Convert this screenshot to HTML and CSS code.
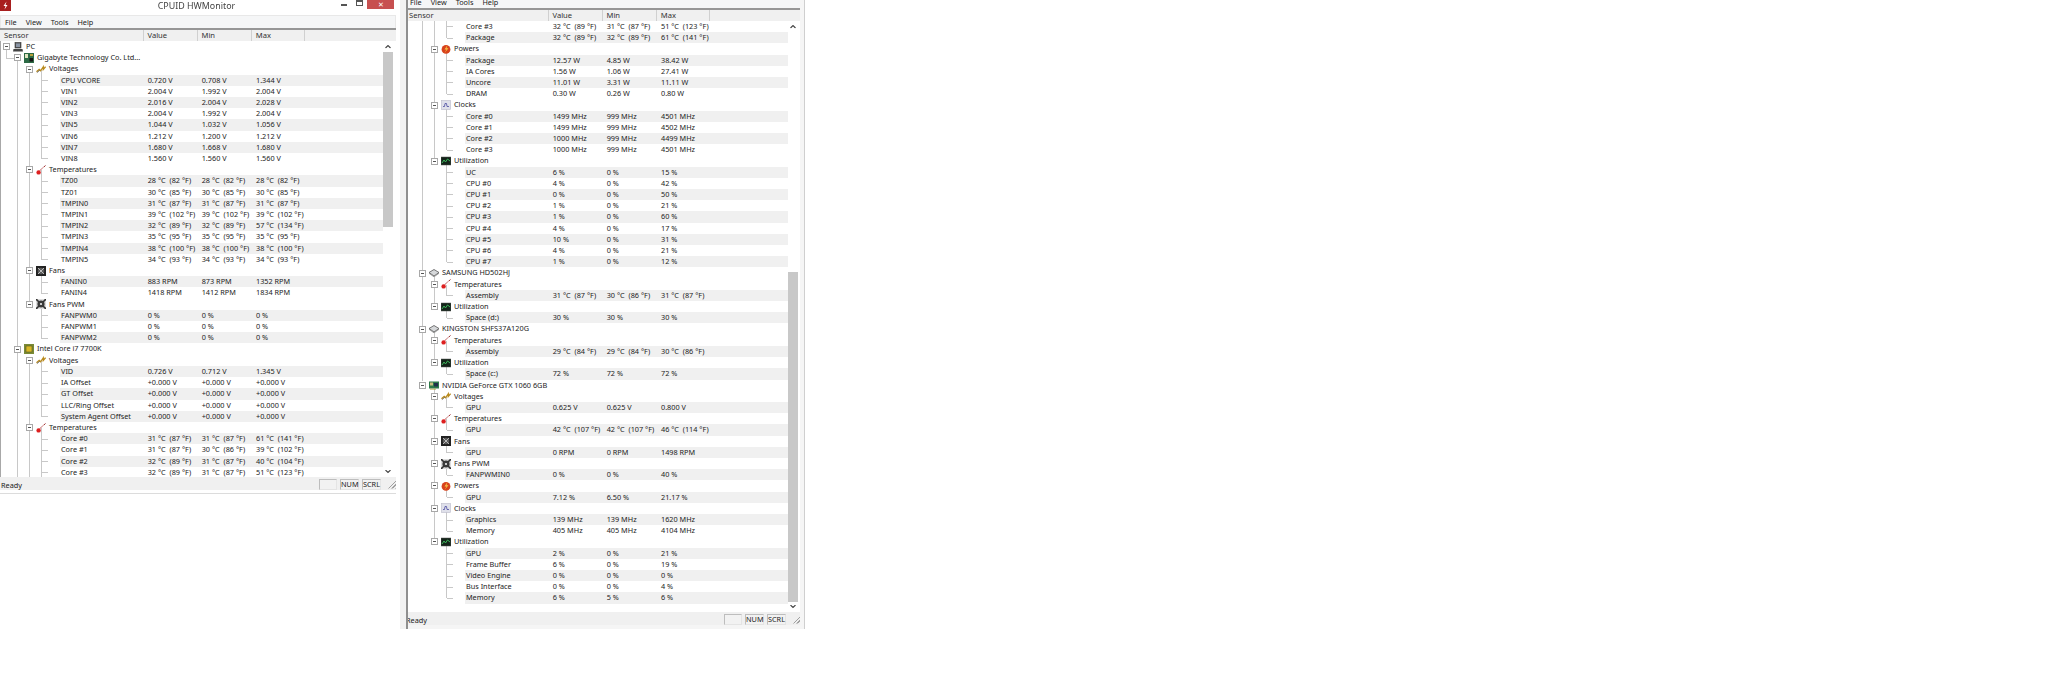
FILE: index.html
```html
<!DOCTYPE html>
<html lang="en">
<head>
<meta charset="utf-8">
<title>CPUID HWMonitor</title>
<link rel="stylesheet" href="styles.css">
</head>
<body>
<svg class="defs" width="0" height="0" aria-hidden="true">
  <symbol id="i-pc" viewBox="0 0 10 10"><rect x="2" y="0.5" width="6" height="5.5" fill="#555" stroke="#333" stroke-width=".6"/><rect x="3" y="1.5" width="4" height="3.5" fill="#8a95a5"/><path d="M0.5 7h9l.5 2.5H0z" fill="#444"/></symbol>
  <symbol id="i-mobo" viewBox="0 0 10 10"><rect width="10" height="10" fill="#2d6a45"/><rect x="1" y="1" width="3" height="4" fill="#dfe3c0"/><rect x="5.5" y="5" width="3.5" height="3.5" fill="#151515"/><rect x="6" y="1" width="3" height="2" fill="#b8a13a"/></symbol>
  <symbol id="i-volt" viewBox="0 0 11 10"><path d="M0.5 8 3.5 5.500 5 7 8 2.500 8 5.500 10.500 2.500" fill="none" stroke="#b98a1c" stroke-width="1.4"/><path d="M1 9 4 6.500" stroke="#444" stroke-width=".8"/></symbol>
  <symbol id="i-temp" viewBox="0 0 10 10"><path d="M9.500 0.500 3.500 6" stroke="#9a2b2b" stroke-width="1"/><path d="M8 2 4 6" stroke="#e8b5b5" stroke-width="1"/><circle cx="2.600" cy="7.400" r="2.200" fill="#dd1f1f"/></symbol>
  <symbol id="i-fan" viewBox="0 0 10 10"><rect width="10" height="10" fill="#222"/><circle cx="5" cy="5" r="3.300" fill="#5b5b5b"/><path d="M5 5 2 2M5 5 8 2M5 5 2 8M5 5 8 8" stroke="#c6c6c6" stroke-width=".9"/></symbol>
  <symbol id="i-pwm" viewBox="0 0 10 10"><rect width="10" height="10" fill="#ddd"/><circle cx="5" cy="5" r="3.600" fill="#3a3a3a"/><path d="M0 0 3 3M10 0 7 3M0 10 3 7M10 10 7 7" stroke="#333" stroke-width="1.600"/><circle cx="5" cy="5" r="1.100" fill="#eee"/></symbol>
  <symbol id="i-cpu" viewBox="0 0 10 10"><rect width="10" height="10" fill="#7a8a36"/><rect x="2" y="2" width="6" height="6" fill="#d9b827" stroke="#5a5a20" stroke-width=".6"/></symbol>
  <symbol id="i-pow" viewBox="0 0 10 10"><circle cx="5" cy="5.400" r="4.400" fill="#d8431c"/><path d="M6.500 1 3.500 5.500H5.500L3.500 9 7.500 4.200H5.500z" fill="#f6c445"/></symbol>
  <symbol id="i-clk" viewBox="0 0 10 10"><rect x=".5" y=".5" width="9" height="9" fill="#dfe0ea" stroke="#b9bac8" stroke-width=".6"/><path d="M2 6.500H3.500L4 3.500H5.500L6 6.500H8" fill="none" stroke="#4a4aa0" stroke-width=".8"/></symbol>
  <symbol id="i-util" viewBox="0 0 10 10"><rect y="1" width="10" height="8" fill="#14241a" stroke="#555" stroke-width=".5"/><path d="M1 7 3 4 4.500 6 6.500 3 9 5" fill="none" stroke="#3fc45f" stroke-width=".9"/></symbol>
  <symbol id="i-hdd" viewBox="0 0 10 10"><path d="M5 1.500 10 4.500 5 8 0 4.500z" fill="#d6d8da" stroke="#555" stroke-width=".8"/><path d="M0 5.300 5 8.800 10 5.300" fill="none" stroke="#777" stroke-width=".7"/></symbol>
  <symbol id="i-gpu" viewBox="0 0 10 10"><rect y="1.500" width="10" height="7" fill="#2f7a4a"/><rect x="1" y="2.500" width="3" height="3" fill="#c9c080"/><rect x="5" y="3" width="4" height="3.500" fill="#20304a"/><path d="M2 8.500v1.500M4 8.500v1.500M6 8.500v1.500" stroke="#b59a2e"/></symbol>
  <symbol id="i-up" viewBox="0 0 6 4"><path d="M.5 3.500 3 1 5.500 3.500" fill="none" stroke="#444" stroke-width="1.100"/></symbol>
  <symbol id="i-down" viewBox="0 0 6 4"><path d="M.5 .5 3 3 5.500 .5" fill="none" stroke="#444" stroke-width="1.100"/></symbol>
</svg>

<main class="desktop">

<section class="window window-left">
  <header class="titlebar">
    <span class="app-icon"><svg viewBox="0 0 11 11" width="11" height="11"><rect width="11" height="11" fill="#a81f1f"/><path d="M6.500 1.500 3.500 6H5.500L4.500 9.500 7.500 5H5.500z" fill="#fff"/></svg></span>
    <h1 class="title">CPUID HWMonitor</h1>
    <span class="btn-min"></span>
    <span class="btn-max"></span>
    <span class="btn-close">✕</span>
  </header>
  <nav class="menubar"><span>File</span><span>View</span><span>Tools</span><span>Help</span></nav>
  <div class="head"><span class="h0">Sensor</span><span class="h1">Value</span><span class="h2">Min</span><span class="h3">Max</span><span class="h4"></span></div>
  <div class="body">
    <div class="list">
      <svg class="tree" width="60" height="436" aria-hidden="true"><path d="M6.500 9V17H15M17.500 20V436M29.500 31V263.500M29.500 319.500V436M41.500 28V118M41.500 129V219M41.500 230V252.500M41.500 263.500V297.500M41.500 319.500V375.500M41.500 386.500V436M42 39.500H48M42 50.500H48M42 61.500H48M42 73H48M42 84H48M42 95.500H48M42 106.500H48M42 117.500H48M42 140H48M42 151.500H48M42 162.500H48M42 173.500H48M42 185H48M42 196H48M42 207.500H48M42 218.500H48M42 241H48M42 252H48M42 274.500H48M42 286H48M42 297H48M42 330.500H48M42 342H48M42 353H48M42 364.500H48M42 375.500H48M42 398H48M42 409H48M42 420.500H48M42 431.500H48"/></svg>
      <div class="row n0"><i class="box"></i><svg class="ico"><use href="#i-pc"/></svg><b>PC</b></div>
      <div class="row n1"><i class="box"></i><svg class="ico"><use href="#i-mobo"/></svg><b>Gigabyte Technology Co. Ltd...</b></div>
      <div class="row n2"><i class="box"></i><svg class="ico"><use href="#i-volt"/></svg><b>Voltages</b></div>
      <div class="leaf alt"><span>CPU VCORE</span><span>0.720 V</span><span>0.708 V</span><span>1.344 V</span></div>
      <div class="leaf"><span>VIN1</span><span>2.004 V</span><span>1.992 V</span><span>2.004 V</span></div>
      <div class="leaf alt"><span>VIN2</span><span>2.016 V</span><span>2.004 V</span><span>2.028 V</span></div>
      <div class="leaf"><span>VIN3</span><span>2.004 V</span><span>1.992 V</span><span>2.004 V</span></div>
      <div class="leaf alt"><span>VIN5</span><span>1.044 V</span><span>1.032 V</span><span>1.056 V</span></div>
      <div class="leaf"><span>VIN6</span><span>1.212 V</span><span>1.200 V</span><span>1.212 V</span></div>
      <div class="leaf alt"><span>VIN7</span><span>1.680 V</span><span>1.668 V</span><span>1.680 V</span></div>
      <div class="leaf"><span>VIN8</span><span>1.560 V</span><span>1.560 V</span><span>1.560 V</span></div>
      <div class="row n2"><i class="box"></i><svg class="ico"><use href="#i-temp"/></svg><b>Temperatures</b></div>
      <div class="leaf alt"><span>TZ00</span><span>28 °C &nbsp;(82 °F)</span><span>28 °C &nbsp;(82 °F)</span><span>28 °C &nbsp;(82 °F)</span></div>
      <div class="leaf"><span>TZ01</span><span>30 °C &nbsp;(85 °F)</span><span>30 °C &nbsp;(85 °F)</span><span>30 °C &nbsp;(85 °F)</span></div>
      <div class="leaf alt"><span>TMPIN0</span><span>31 °C &nbsp;(87 °F)</span><span>31 °C &nbsp;(87 °F)</span><span>31 °C &nbsp;(87 °F)</span></div>
      <div class="leaf"><span>TMPIN1</span><span>39 °C &nbsp;(102 °F)</span><span>39 °C &nbsp;(102 °F)</span><span>39 °C &nbsp;(102 °F)</span></div>
      <div class="leaf alt"><span>TMPIN2</span><span>32 °C &nbsp;(89 °F)</span><span>32 °C &nbsp;(89 °F)</span><span>57 °C &nbsp;(134 °F)</span></div>
      <div class="leaf"><span>TMPIN3</span><span>35 °C &nbsp;(95 °F)</span><span>35 °C &nbsp;(95 °F)</span><span>35 °C &nbsp;(95 °F)</span></div>
      <div class="leaf alt"><span>TMPIN4</span><span>38 °C &nbsp;(100 °F)</span><span>38 °C &nbsp;(100 °F)</span><span>38 °C &nbsp;(100 °F)</span></div>
      <div class="leaf"><span>TMPIN5</span><span>34 °C &nbsp;(93 °F)</span><span>34 °C &nbsp;(93 °F)</span><span>34 °C &nbsp;(93 °F)</span></div>
      <div class="row n2"><i class="box"></i><svg class="ico"><use href="#i-fan"/></svg><b>Fans</b></div>
      <div class="leaf alt"><span>FANIN0</span><span>883 RPM</span><span>873 RPM</span><span>1352 RPM</span></div>
      <div class="leaf"><span>FANIN4</span><span>1418 RPM</span><span>1412 RPM</span><span>1834 RPM</span></div>
      <div class="row n2"><i class="box"></i><svg class="ico"><use href="#i-pwm"/></svg><b>Fans PWM</b></div>
      <div class="leaf alt"><span>FANPWM0</span><span>0 %</span><span>0 %</span><span>0 %</span></div>
      <div class="leaf"><span>FANPWM1</span><span>0 %</span><span>0 %</span><span>0 %</span></div>
      <div class="leaf alt"><span>FANPWM2</span><span>0 %</span><span>0 %</span><span>0 %</span></div>
      <div class="row n1"><i class="box"></i><svg class="ico"><use href="#i-cpu"/></svg><b>Intel Core i7 7700K</b></div>
      <div class="row n2"><i class="box"></i><svg class="ico"><use href="#i-volt"/></svg><b>Voltages</b></div>
      <div class="leaf alt"><span>VID</span><span>0.726 V</span><span>0.712 V</span><span>1.345 V</span></div>
      <div class="leaf"><span>IA Offset</span><span>+0.000 V</span><span>+0.000 V</span><span>+0.000 V</span></div>
      <div class="leaf alt"><span>GT Offset</span><span>+0.000 V</span><span>+0.000 V</span><span>+0.000 V</span></div>
      <div class="leaf"><span>LLC/Ring Offset</span><span>+0.000 V</span><span>+0.000 V</span><span>+0.000 V</span></div>
      <div class="leaf alt"><span>System Agent Offset</span><span>+0.000 V</span><span>+0.000 V</span><span>+0.000 V</span></div>
      <div class="row n2"><i class="box"></i><svg class="ico"><use href="#i-temp"/></svg><b>Temperatures</b></div>
      <div class="leaf alt"><span>Core #0</span><span>31 °C &nbsp;(87 °F)</span><span>31 °C &nbsp;(87 °F)</span><span>61 °C &nbsp;(141 °F)</span></div>
      <div class="leaf"><span>Core #1</span><span>31 °C &nbsp;(87 °F)</span><span>30 °C &nbsp;(86 °F)</span><span>39 °C &nbsp;(102 °F)</span></div>
      <div class="leaf alt"><span>Core #2</span><span>32 °C &nbsp;(89 °F)</span><span>31 °C &nbsp;(87 °F)</span><span>40 °C &nbsp;(104 °F)</span></div>
      <div class="leaf"><span>Core #3</span><span>32 °C &nbsp;(89 °F)</span><span>31 °C &nbsp;(87 °F)</span><span>51 °C &nbsp;(123 °F)</span></div>
    </div>
    <div class="scroll"><svg class="arrow"><use href="#i-up"/></svg><span class="thumb thumb-left"></span><svg class="arrow arrow-down"><use href="#i-down"/></svg></div>
  </div>
  <footer class="status"><span class="ready">Ready</span><span class="pane pane-blank"></span><span class="pane">NUM</span><span class="pane">SCRL</span><span class="grip"></span></footer>
</section>

<section class="window window-right">
  <nav class="menubar menubar-cut"><span>File</span><span>View</span><span>Tools</span><span>Help</span></nav>
  <div class="head"><span class="h0">Sensor</span><span class="h1">Value</span><span class="h2">Min</span><span class="h3">Max</span><span class="h4"></span></div>
  <div class="body">
    <div class="list">
      <svg class="tree" width="60" height="591" aria-hidden="true"><path d="M17.500 0V360M29.500 0V140M29.500 256V286M29.500 312V342M29.500 368V521M41.500 0V17M41.500 28V73M41.500 84V129M41.500 140V241M41.500 263.500V275M41.500 286V297M41.500 319.500V331M41.500 342V353M41.500 375.500V387M41.500 398V409M41.500 420V432M41.500 443V454M41.500 465V476M41.500 488V510M41.500 521V577M42 5.500H48M42 17H48M42 39.500H48M42 50.500H48M42 61.500H48M42 73H48M42 95.500H48M42 106.500H48M42 117.500H48M42 129H48M42 151.500H48M42 162.500H48M42 173.500H48M42 185H48M42 196H48M42 207.500H48M42 218.500H48M42 229.500H48M42 241H48M42 274.500H48M42 297H48M42 330.500H48M42 353H48M42 386.500H48M42 409H48M42 431.500H48M42 454H48M42 476.500H48M42 499H48M42 510H48M42 532.500H48M42 543.500H48M42 555H48M42 566H48M42 577H48"/></svg>
      <div class="leaf"><span>Core #3</span><span>32 °C &nbsp;(89 °F)</span><span>31 °C &nbsp;(87 °F)</span><span>51 °C &nbsp;(123 °F)</span></div>
      <div class="leaf alt"><span>Package</span><span>32 °C &nbsp;(89 °F)</span><span>32 °C &nbsp;(89 °F)</span><span>61 °C &nbsp;(141 °F)</span></div>
      <div class="row n2"><i class="box"></i><svg class="ico"><use href="#i-pow"/></svg><b>Powers</b></div>
      <div class="leaf alt"><span>Package</span><span>12.57 W</span><span>4.85 W</span><span>38.42 W</span></div>
      <div class="leaf"><span>IA Cores</span><span>1.56 W</span><span>1.06 W</span><span>27.41 W</span></div>
      <div class="leaf alt"><span>Uncore</span><span>11.01 W</span><span>3.31 W</span><span>11.11 W</span></div>
      <div class="leaf"><span>DRAM</span><span>0.30 W</span><span>0.26 W</span><span>0.80 W</span></div>
      <div class="row n2"><i class="box"></i><svg class="ico"><use href="#i-clk"/></svg><b>Clocks</b></div>
      <div class="leaf alt"><span>Core #0</span><span>1499 MHz</span><span>999 MHz</span><span>4501 MHz</span></div>
      <div class="leaf"><span>Core #1</span><span>1499 MHz</span><span>999 MHz</span><span>4502 MHz</span></div>
      <div class="leaf alt"><span>Core #2</span><span>1000 MHz</span><span>999 MHz</span><span>4499 MHz</span></div>
      <div class="leaf"><span>Core #3</span><span>1000 MHz</span><span>999 MHz</span><span>4501 MHz</span></div>
      <div class="row n2"><i class="box"></i><svg class="ico"><use href="#i-util"/></svg><b>Utilization</b></div>
      <div class="leaf alt"><span>UC</span><span>6 %</span><span>0 %</span><span>15 %</span></div>
      <div class="leaf"><span>CPU #0</span><span>4 %</span><span>0 %</span><span>42 %</span></div>
      <div class="leaf alt"><span>CPU #1</span><span>0 %</span><span>0 %</span><span>50 %</span></div>
      <div class="leaf"><span>CPU #2</span><span>1 %</span><span>0 %</span><span>21 %</span></div>
      <div class="leaf alt"><span>CPU #3</span><span>1 %</span><span>0 %</span><span>60 %</span></div>
      <div class="leaf"><span>CPU #4</span><span>4 %</span><span>0 %</span><span>17 %</span></div>
      <div class="leaf alt"><span>CPU #5</span><span>10 %</span><span>0 %</span><span>31 %</span></div>
      <div class="leaf"><span>CPU #6</span><span>4 %</span><span>0 %</span><span>21 %</span></div>
      <div class="leaf alt"><span>CPU #7</span><span>1 %</span><span>0 %</span><span>12 %</span></div>
      <div class="row n1"><i class="box"></i><svg class="ico"><use href="#i-hdd"/></svg><b>SAMSUNG HD502HJ</b></div>
      <div class="row n2"><i class="box"></i><svg class="ico"><use href="#i-temp"/></svg><b>Temperatures</b></div>
      <div class="leaf alt"><span>Assembly</span><span>31 °C &nbsp;(87 °F)</span><span>30 °C &nbsp;(86 °F)</span><span>31 °C &nbsp;(87 °F)</span></div>
      <div class="row n2"><i class="box"></i><svg class="ico"><use href="#i-util"/></svg><b>Utilization</b></div>
      <div class="leaf alt"><span>Space (d:)</span><span>30 %</span><span>30 %</span><span>30 %</span></div>
      <div class="row n1"><i class="box"></i><svg class="ico"><use href="#i-hdd"/></svg><b>KINGSTON SHFS37A120G</b></div>
      <div class="row n2"><i class="box"></i><svg class="ico"><use href="#i-temp"/></svg><b>Temperatures</b></div>
      <div class="leaf alt"><span>Assembly</span><span>29 °C &nbsp;(84 °F)</span><span>29 °C &nbsp;(84 °F)</span><span>30 °C &nbsp;(86 °F)</span></div>
      <div class="row n2"><i class="box"></i><svg class="ico"><use href="#i-util"/></svg><b>Utilization</b></div>
      <div class="leaf alt"><span>Space (c:)</span><span>72 %</span><span>72 %</span><span>72 %</span></div>
      <div class="row n1"><i class="box"></i><svg class="ico"><use href="#i-gpu"/></svg><b>NVIDIA GeForce GTX 1060 6GB</b></div>
      <div class="row n2"><i class="box"></i><svg class="ico"><use href="#i-volt"/></svg><b>Voltages</b></div>
      <div class="leaf alt"><span>GPU</span><span>0.625 V</span><span>0.625 V</span><span>0.800 V</span></div>
      <div class="row n2"><i class="box"></i><svg class="ico"><use href="#i-temp"/></svg><b>Temperatures</b></div>
      <div class="leaf alt"><span>GPU</span><span>42 °C &nbsp;(107 °F)</span><span>42 °C &nbsp;(107 °F)</span><span>46 °C &nbsp;(114 °F)</span></div>
      <div class="row n2"><i class="box"></i><svg class="ico"><use href="#i-fan"/></svg><b>Fans</b></div>
      <div class="leaf alt"><span>GPU</span><span>0 RPM</span><span>0 RPM</span><span>1498 RPM</span></div>
      <div class="row n2"><i class="box"></i><svg class="ico"><use href="#i-pwm"/></svg><b>Fans PWM</b></div>
      <div class="leaf alt"><span>FANPWMIN0</span><span>0 %</span><span>0 %</span><span>40 %</span></div>
      <div class="row n2"><i class="box"></i><svg class="ico"><use href="#i-pow"/></svg><b>Powers</b></div>
      <div class="leaf alt"><span>GPU</span><span>7.12 %</span><span>6.50 %</span><span>21.17 %</span></div>
      <div class="row n2"><i class="box"></i><svg class="ico"><use href="#i-clk"/></svg><b>Clocks</b></div>
      <div class="leaf alt"><span>Graphics</span><span>139 MHz</span><span>139 MHz</span><span>1620 MHz</span></div>
      <div class="leaf"><span>Memory</span><span>405 MHz</span><span>405 MHz</span><span>4104 MHz</span></div>
      <div class="row n2"><i class="box"></i><svg class="ico"><use href="#i-util"/></svg><b>Utilization</b></div>
      <div class="leaf alt"><span>GPU</span><span>2 %</span><span>0 %</span><span>21 %</span></div>
      <div class="leaf"><span>Frame Buffer</span><span>6 %</span><span>0 %</span><span>19 %</span></div>
      <div class="leaf alt"><span>Video Engine</span><span>0 %</span><span>0 %</span><span>0 %</span></div>
      <div class="leaf"><span>Bus Interface</span><span>0 %</span><span>0 %</span><span>4 %</span></div>
      <div class="leaf alt"><span>Memory</span><span>6 %</span><span>5 %</span><span>6 %</span></div>
    </div>
    <div class="scroll"><svg class="arrow"><use href="#i-up"/></svg><span class="thumb thumb-right"></span><svg class="arrow arrow-down"><use href="#i-down"/></svg></div>
  </div>
  <footer class="status"><span class="ready">Ready</span><span class="pane pane-blank"></span><span class="pane">NUM</span><span class="pane">SCRL</span><span class="grip"></span></footer>
</section>

</main>
</body>
</html>
```

FILE: styles.css
```css
* { box-sizing: border-box; }
html, body { margin: 0; height: 100%; background: #fff; overflow: hidden; }
.defs { position: absolute; }
body { font-family: "Noto Sans", "Open Sans", sans-serif; font-size: 7.3px; color: #222; }

.desktop { display: flex; align-items: flex-start; filter: blur(0.3px); }

.window { display: flex; flex-direction: column; background: #f0f0f0; flex: none; }
.window-left { width: 396px; height: 490px; box-shadow: 0 3px 0 #fff, 0 4px 0 #dcdcdc; }
.window-right { width: 396px; margin-left: 9px; height: 625px; position: relative; box-shadow: 0 4px 0 #f5f5f5; }
.window-right::before { content: ""; position: absolute; left: -5px; top: 0; bottom: -4px; width: 6px; background: #f2f2f2; border-right: 2px solid #8f8f8f; }
.window-right::after { content: ""; position: absolute; right: -4px; top: 0; bottom: -4px; width: 4px; background: #f5f5f5; border-right: 1px solid #cfcfcf; }

.titlebar { height: 15px; flex: none; display: flex; align-items: flex-start; background: #fff; position: relative; }
.app-icon { display: block; width: 11px; height: 11px; }
.app-icon svg { display: block; }
.title { margin: 0; position: absolute; left: 0; right: 3px; top: 0; text-align: center; font-weight: 400; font-size: 8.9px; line-height: 12px; color: #444; }
.btn-min { position: absolute; left: 341px; top: 4px; width: 6px; height: 2px; background: #555; }
.btn-max { position: absolute; left: 356px; top: 0; width: 7px; height: 6px; border: 1px solid #555; border-top-width: 2px; }
.btn-close { position: absolute; left: 367px; top: 0; width: 27px; height: 9px; background: #c75050; color: #fff; text-align: center; font-size: 6.5px; line-height: 9px; }

.menubar { height: 13px; flex: none; display: flex; gap: 9px; padding-left: 4px; padding-top: 1px; align-items: center; background: #f5f6f7; border: 1px solid #e8e8e8; border-bottom: 0; }
.menubar span { line-height: 11px; }
.menubar-cut { margin-top: -5px; }

.head { height: 13px; flex: none; display: flex; border-top: 2px solid #969696; background: #f0f0f0; line-height: 11px; font-size: 7.6px; color: #333; }
.head span { display: block; padding-left: 4px; border-right: 1px solid #d0d0d0; }
.h0 { width: 143.500px; }
.h1 { width: 54px; }
.h2 { width: 54.300px; }
.h3 { width: 53.700px; }
.h4 { flex: 1; border-right: 0 !important; }

.body { flex: 1; min-height: 0; display: flex; background: #fff; border-left: 1px solid #a8a8a8; overflow: hidden; }
.list { flex: 1; min-width: 0; position: relative; overflow: hidden; }
.tree { position: absolute; left: -1px; top: 0; fill: none; stroke: #c8c8c8; stroke-width: 1; }
.tree path { shape-rendering: crispEdges; }

.row, .leaf { height: 11.21px; line-height: 11.21px; white-space: nowrap; }
.row { display: flex; align-items: center; position: relative; }
.row b { font-weight: 400; }
.n0 { padding-left: 2px; }
.n1 { padding-left: 13px; }
.n2 { padding-left: 25px; }
.box { display: block; flex: none; width: 7px; height: 7px; border: 1px solid #a8a8a8; background: linear-gradient(#555, #555) center / 3px 1px no-repeat #fff; margin-right: 3px; }
.ico { flex: none; width: 10px; height: 10px; margin-right: 3px; }

.leaf { display: grid; grid-template-columns: 86.700px 54px 54.300px 1fr; margin-left: 59px; padding-left: 1px; position: relative; }
.alt { background: #f0f0f0; }

.scroll { flex: none; width: 13px; display: flex; flex-direction: column; align-items: stretch; background: #fff; padding-right: 3px; position: relative; }
.arrow { display: block; flex: none; width: 10px; height: 11px; padding: 3.500px 2px; }
.thumb { display: block; background: #c8c8c8; flex: none; }
.thumb-left { height: 175px; }
.thumb-right { height: 330px; margin-top: 240px; }
.arrow-down { position: absolute; bottom: 0; left: 0; }

.status { height: 13px; flex: none; display: flex; align-items: center; background: #f0f0f0; line-height: 12px; padding: 1px 0 0 1px; }
.ready { flex: 1; padding-top: 1px; }
.pane { display: block; flex: none; width: 19px; height: 11px; line-height: 9.500px; margin-left: 3px; text-align: center; border: 1px solid #e4e4e4; border-top-color: #bdbdbd; border-left-color: #bdbdbd; background: #f2f2f2; }
.pane-blank { width: 18px; }
.grip { display: block; flex: none; width: 9px; height: 9px; margin-left: 6px; background: repeating-linear-gradient(135deg, #f0f0f0 0 1.500px, #a0a0a0 1.500px 2.500px); clip-path: polygon(100% 0, 100% 100%, 0 100%); }
```
